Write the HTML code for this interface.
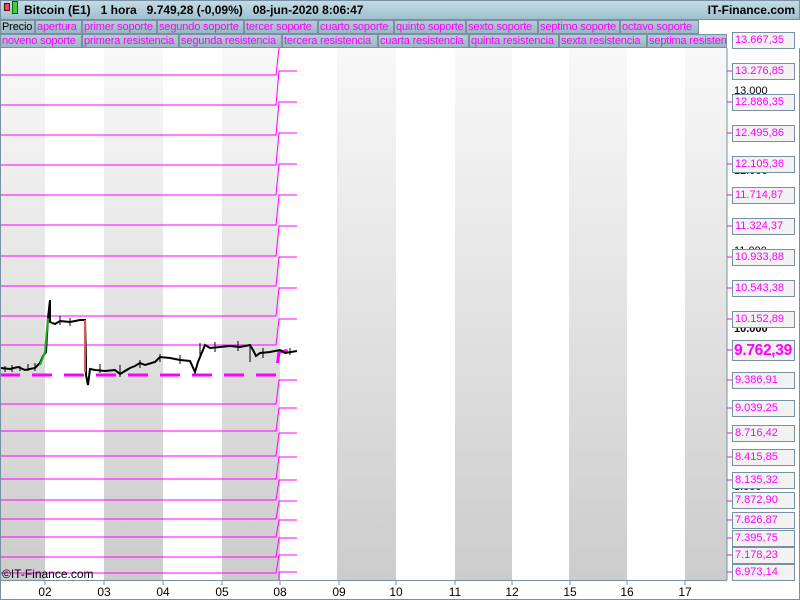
<!DOCTYPE html>
<html><head><meta charset="utf-8"><style>
*{margin:0;padding:0;box-sizing:border-box}
body{width:800px;height:600px;overflow:hidden;background:#fff;font-family:"Liberation Sans",sans-serif;position:relative}
.top{position:absolute;left:0;top:0;width:800px;height:20px;background:linear-gradient(#c2dce6,#9fbfcd);border:1px solid #7890a0;font-size:12px;font-weight:bold;line-height:18px}
.tabs{position:absolute;left:0;height:14px;display:flex}
.tab{height:14px;font-size:11px;letter-spacing:-0.15px;line-height:13px;color:#ff00ff;background:linear-gradient(#b4ccd8,#9ab6c4);border:1px solid #7890a0;padding:0 1px;white-space:nowrap;overflow:hidden}
.lab{position:absolute;left:732px;width:63px;height:17px;border:1px solid #7890a0;background:#f2f2f2;color:#ff00ff;font-size:11px;line-height:15px;padding-left:2px;white-space:nowrap;overflow:hidden}
.tk{position:absolute;left:734px;font-size:11px;color:#000}
.dx{position:absolute;top:585px;font-size:12px;transform:translateX(-50%)}
</style></head><body>
<div class="top"><span style="position:absolute;left:3px;top:2px;width:6px;height:8px;background:#e05050;border:1px solid #600"></span><span style="position:absolute;left:11px;top:0;width:6px;height:13px;background:#40d040;border:1px solid #060"></span><span style="position:absolute;left:23px">Bitcoin (E1) &nbsp; 1 hora &nbsp; 9.749,28 (-0,09%) &nbsp; 08-jun-2020 8:06:47</span><span style="position:absolute;right:4px">IT-Finance.com</span></div>
<div class="tabs" style="top:20px"><div class="tab" style="color:#000;width:35px">Precio</div><div class="tab" style="width:47px">apertura</div><div class="tab" style="width:75px">primer soporte</div><div class="tab" style="width:87px">segundo soporte</div><div class="tab" style="width:74px">tercer soporte</div><div class="tab" style="width:76px">cuarto soporte</div><div class="tab" style="width:72px">quinto soporte</div><div class="tab" style="width:72px">sexto soporte</div><div class="tab" style="width:82px">septimo soporte</div><div class="tab" style="width:79px">octavo soporte</div></div>
<div class="tabs" style="top:34px"><div class="tab" style="width:82px">noveno soporte</div><div class="tab" style="width:97px">primera resistencia</div><div class="tab" style="width:103px">segunda resistencia</div><div class="tab" style="width:96px">tercera resistencia</div><div class="tab" style="width:91px">cuarta resistencia</div><div class="tab" style="width:90px">quinta resistencia</div><div class="tab" style="width:88px">sexta resistencia</div><div class="tab" style="width:80px">septima resistencia</div></div>
<svg style="position:absolute;left:0;top:48px" width="800" height="552" viewBox="0 48 800 552">
<defs><linearGradient id="g" x1="0" y1="0" x2="0" y2="1"><stop offset="0" stop-color="#f8f8f8"/><stop offset="1" stop-color="#cccccc"/></linearGradient></defs>
<g fill="url(#g)"><rect x="0" y="48" width="45" height="532"/><rect x="104" y="48" width="59" height="532"/><rect x="222" y="48" width="58" height="532"/><rect x="337" y="48" width="59" height="532"/><rect x="455" y="48" width="57" height="532"/><rect x="569" y="48" width="58" height="532"/><rect x="685" y="48" width="42" height="532"/></g>
<g stroke="#ff00ff" stroke-width="1" fill="none">
<polyline points="0,75 276,75 279,48"/>
<polyline points="0,105 276,105 279,71 297,71"/>
<polyline points="0,135 276,135 279,102 297,102"/>
<polyline points="0,165 276,165 279,133 297,133"/>
<polyline points="0,195 276,195 279,164 297,164"/>
<polyline points="0,225 276,225 279,195 297,195"/>
<polyline points="0,256 276,256 279,226 297,226"/>
<polyline points="0,286 276,286 279,257 297,257"/>
<polyline points="0,316 276,316 279,288 297,288"/>
<polyline points="0,345 276,345 279,319 297,319"/>
<polyline points="0,404 276,404 279,380 297,380"/>
<polyline points="0,431 276,431 279,408 297,408"/>
<polyline points="0,456 276,456 279,433 297,433"/>
<polyline points="0,479 276,479 279,457 297,457"/>
<polyline points="0,500 276,500 279,480 297,480"/>
<polyline points="0,519 276,519 279,501 297,501"/>
<polyline points="0,537 276,537 279,520 297,520"/>
<polyline points="0,557 276,557 279,538 297,538"/>
<polyline points="0,573 276,573 279,555 297,555"/>
<polyline points="279,580 279,572 297,572"/>
</g>
<polyline points="0,375 276,375 279,352 290,350" stroke="#ff00ff" stroke-width="3" fill="none" stroke-dasharray="20,12"/>
<g stroke="#000" stroke-width="1">
<path d="M5,366v6M12,365v7M20,366v5M28,364v7M35,363v8M60,316v9M70,318v8M100,364v9M120,365v12M140,360v8M160,354v8M180,355v9M200,343v12M215,342v10M238,341v10M250,346v16M263,348v10M290,348v7"/>
</g>
<polyline points="1,368 10,369 18,367 25,370 35,368 40,363 43,356 46,352 48,318 50,300 50,322 55,324 60,321 70,322 80,320 85,320 86,360 86,375 88,385 90,369 95,370 105,371 115,370 120,374 125,371 130,368 135,366 140,363 145,365 155,362 160,357 170,358 180,360 190,361 195,372 198,362 205,345 210,348 220,347 230,346 240,347 250,345 253,350 256,356 260,353 270,352 275,351 280,350 285,353 297,351" stroke="#000" stroke-width="2" fill="none"/>
<polyline points="40,365 45,352 48,318" stroke="#22aa22" stroke-width="2" fill="none"/>
<line x1="85" y1="320" x2="85" y2="372" stroke="#dd5555" stroke-width="2"/>
<line x1="727" y1="48" x2="727" y2="580" stroke="#7890a0"/>
<line x1="0" y1="580.5" x2="727" y2="580.5" stroke="#7890a0"/>
<g stroke="#7890a0"><line x1="45" y1="580" x2="45" y2="585"/><line x1="104" y1="580" x2="104" y2="585"/><line x1="163" y1="580" x2="163" y2="585"/><line x1="222" y1="580" x2="222" y2="585"/><line x1="280" y1="580" x2="280" y2="585"/><line x1="339" y1="580" x2="339" y2="585"/><line x1="396" y1="580" x2="396" y2="585"/><line x1="455" y1="580" x2="455" y2="585"/><line x1="512" y1="580" x2="512" y2="585"/><line x1="570" y1="580" x2="570" y2="585"/><line x1="627" y1="580" x2="627" y2="585"/><line x1="685" y1="580" x2="685" y2="585"/></g>
<g stroke="#ff00ff"><line x1="727" y1="40" x2="732" y2="40"/><line x1="727" y1="71" x2="732" y2="71"/><line x1="727" y1="102" x2="732" y2="102"/><line x1="727" y1="133" x2="732" y2="133"/><line x1="727" y1="164" x2="732" y2="164"/><line x1="727" y1="195" x2="732" y2="195"/><line x1="727" y1="226" x2="732" y2="226"/><line x1="727" y1="257" x2="732" y2="257"/><line x1="727" y1="288" x2="732" y2="288"/><line x1="727" y1="319" x2="732" y2="319"/><line x1="727" y1="350" x2="732" y2="350"/><line x1="727" y1="380" x2="732" y2="380"/><line x1="727" y1="408" x2="732" y2="408"/><line x1="727" y1="433" x2="732" y2="433"/><line x1="727" y1="457" x2="732" y2="457"/><line x1="727" y1="480" x2="732" y2="480"/><line x1="727" y1="501" x2="732" y2="501"/><line x1="727" y1="520" x2="732" y2="520"/><line x1="727" y1="538" x2="732" y2="538"/><line x1="727" y1="555" x2="732" y2="555"/><line x1="727" y1="572" x2="732" y2="572"/></g>
<rect x="0.5" y="0.5" width="799" height="599" fill="none" stroke="#7890a0"/>
</svg>
<div class="tk" style="top:85px">13.000</div><div class="tk" style="top:165px">12.000</div><div class="tk" style="top:245px">11.000</div><div class="tk" style="top:323px;font-weight:bold">10.000</div><div class="tk" style="top:481px">8.000</div>
<div class="lab" style="top:32px">13.667,35</div><div class="lab" style="top:63px">13.276,85</div><div class="lab" style="top:94px">12.886,35</div><div class="lab" style="top:125px">12.495,86</div><div class="lab" style="top:156px">12.105,36</div><div class="lab" style="top:187px">11.714,87</div><div class="lab" style="top:218px">11.324,37</div><div class="lab" style="top:249px">10.933,88</div><div class="lab" style="top:280px">10.543,38</div><div class="lab" style="top:311px">10.152,89</div>
<div class="lab" style="top:340px;height:21px;font-size:15.5px;font-weight:bold;line-height:19px;padding-left:1px;letter-spacing:-0.3px">9.762,39</div>
<div class="lab" style="top:372px">9.386,91</div><div class="lab" style="top:400px">9.039,25</div><div class="lab" style="top:425px">8.716,42</div><div class="lab" style="top:449px">8.415,85</div><div class="lab" style="top:472px">8.135,32</div><div class="lab" style="top:492px">7.872,90</div><div class="lab" style="top:512px">7.626,87</div><div class="lab" style="top:530px">7.395,75</div><div class="lab" style="top:547px">7.178,23</div><div class="lab" style="top:564px">6.973,14</div>
<div style="position:absolute;left:2px;top:567px;font-size:12px">©IT-Finance.com</div>
<div class="dx" style="left:45px">02</div><div class="dx" style="left:104px">03</div><div class="dx" style="left:163px">04</div><div class="dx" style="left:222px">05</div><div class="dx" style="left:280px">08</div><div class="dx" style="left:339px">09</div><div class="dx" style="left:396px">10</div><div class="dx" style="left:455px">11</div><div class="dx" style="left:512px">12</div><div class="dx" style="left:570px">15</div><div class="dx" style="left:627px">16</div><div class="dx" style="left:685px">17</div>
</body></html>
